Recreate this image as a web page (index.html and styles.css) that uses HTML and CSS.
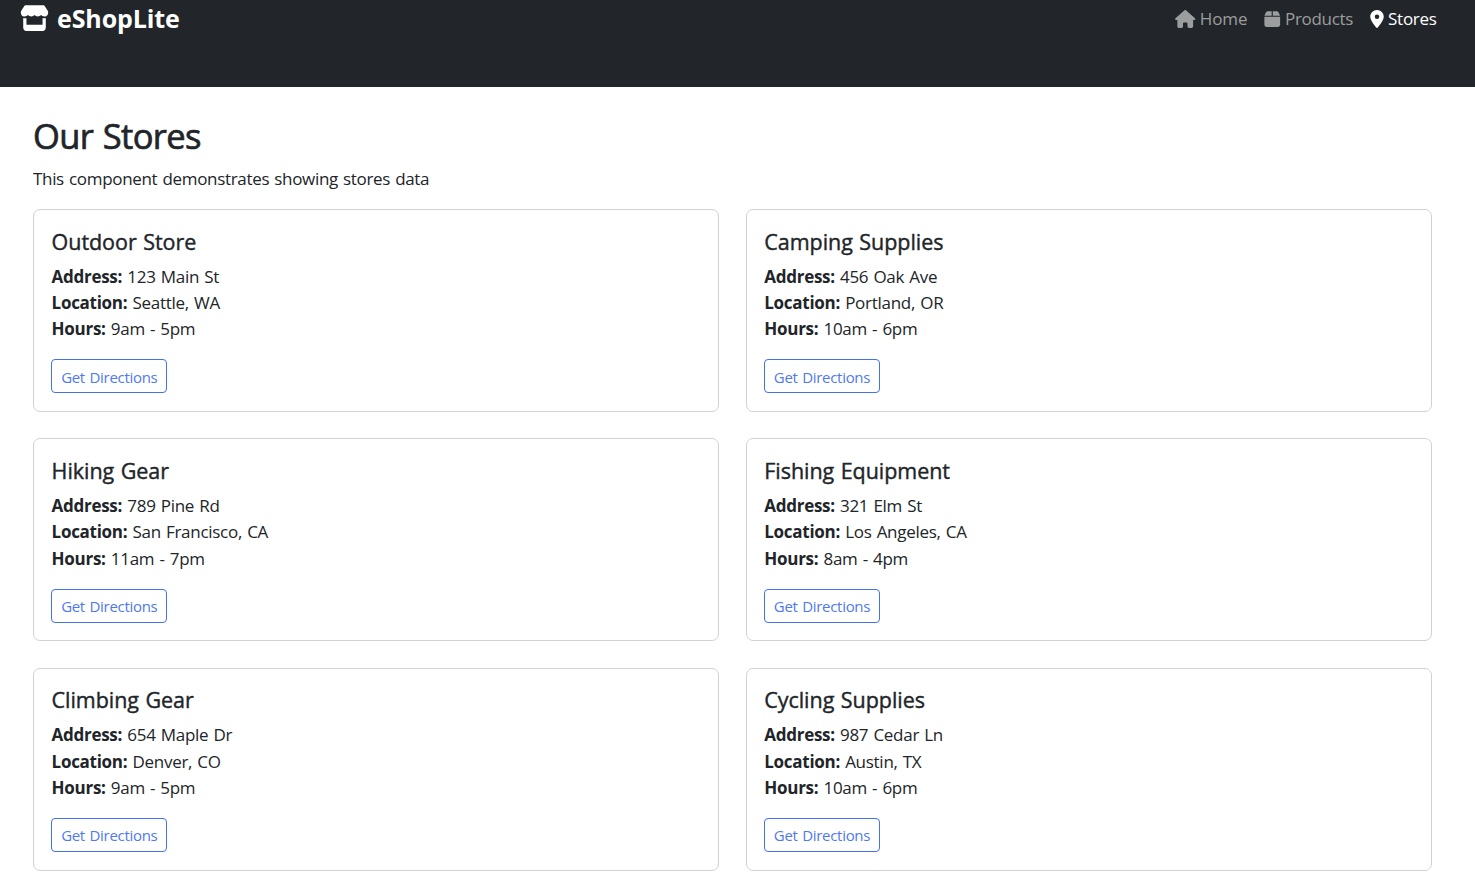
FILE: index.html
```html
<!DOCTYPE html>
<html lang="en">
<head>
<meta charset="utf-8">
<title>eShopLite - Stores</title>
<link rel="stylesheet" href="styles.css">
</head>
<body>
<header class="topbar">
  <a class="brand">
    <svg class="brand-icon" viewBox="0 0 576 512"><path d="M547.6 103.800L490.300 13.100C485.200 5 476.100 0 466.400 0H109.600C99.900 0 90.800 5 85.700 13.100L28.300 103.800c-29.600 46.800-3.400 111.900 51.900 119.400c4 .5 8.100 .8 12.100 .8c26.100 0 49.300-11.400 65.200-29c15.900 17.600 39.100 29 65.200 29c26.100 0 49.300-11.400 65.200-29c15.900 17.600 39.100 29 65.200 29c26.200 0 49.300-11.400 65.200-29c16 17.600 39.100 29 65.200 29c4.100 0 8.100-.3 12.100-.8c55.500-7.400 81.800-72.500 52.100-119.400zM499.700 254.900c-5.300 .7-10.700 1.100-16.200 1.100c-12.400 0-24.300-1.900-35.400-5.300V384H128V250.600c-11.200 3.500-23.200 5.400-35.600 5.400c-5.500 0-11-.4-16.300-1.100c-4.100-.6-8.100-1.300-12.100-2.300V448c0 35.300 28.700 64 64 64H448c35.300 0 64-28.700 64-64V252.600c-4 1-8 1.800-12.300 2.300z"/></svg>
    <span class="brand-name">eShopLite</span>
  </a>
  <nav class="nav">
    <a class="nav-link nav-home"><svg class="icon-house" viewBox="0 0 576 512"><path d="M575.8 255.500c0 18-15 32.100-32 32.100h-32l.7 160.200c0 2.700-.2 5.400-.5 8.100V472c0 22.100-17.900 40-40 40H392c-22.100 0-40-17.900-40-40V384c0-17.700-14.300-32-32-32H256c-17.700 0-32 14.300-32 32v88c0 22.100-17.900 40-40 40H104c-22.100 0-40-17.900-40-40V287.600H32c-18 0-32-14-32-32.100c0-9 3-17 10-24L266.400 8c7-7 15-8 22-8s15 2 21 7L564.800 231.500c8 7 12 15 11 24z"/></svg><span>Home</span></a>
    <a class="nav-link nav-products"><svg class="icon-box" viewBox="0 0 448 512"><path d="M50.700 58.500L0 160H208V32H93.700C75.500 32 58.900 42.300 50.700 58.500zM240 160H448L397.300 58.500C389.100 42.300 372.500 32 354.300 32H240V160zm208 32H0V416c0 35.300 28.700 64 64 64H384c35.300 0 64-28.700 64-64V192z"/></svg><span>Products</span></a>
    <a class="nav-link nav-stores active"><svg class="icon-pin" viewBox="0 0 384 512"><path d="M215.700 499.200C267 435 384 279.400 384 192C384 86 298 0 192 0S0 86 0 192c0 87.400 117 243 168.300 307.200c12.300 15.300 35.100 15.300 47.400 0zM192 128a64 64 0 1 1 0 128a64 64 0 1 1 0-128z"/></svg><span>Stores</span></a>
  </nav>
</header>
<main class="content">
  <h1 class="page-title">Our Stores</h1>
  <p class="intro">This component demonstrates showing stores data</p>
  <div class="grid">
    <article class="card">
      <h2 class="card-title">Outdoor Store</h2>
      <p class="details"><strong>Address:</strong> 123 Main St<br><strong>Location:</strong> Seattle, WA<br><strong>Hours:</strong> 9am - 5pm</p>
      <a class="btn">Get Directions</a>
    </article>
    <article class="card">
      <h2 class="card-title">Camping Supplies</h2>
      <p class="details"><strong>Address:</strong> 456 Oak Ave<br><strong>Location:</strong> Portland, OR<br><strong>Hours:</strong> 10am - 6pm</p>
      <a class="btn">Get Directions</a>
    </article>
    <article class="card">
      <h2 class="card-title">Hiking Gear</h2>
      <p class="details"><strong>Address:</strong> 789 Pine Rd<br><strong>Location:</strong> San Francisco, CA<br><strong>Hours:</strong> 11am - 7pm</p>
      <a class="btn">Get Directions</a>
    </article>
    <article class="card">
      <h2 class="card-title">Fishing Equipment</h2>
      <p class="details"><strong>Address:</strong> 321 Elm St<br><strong>Location:</strong> Los Angeles, CA<br><strong>Hours:</strong> 8am - 4pm</p>
      <a class="btn">Get Directions</a>
    </article>
    <article class="card">
      <h2 class="card-title">Climbing Gear</h2>
      <p class="details"><strong>Address:</strong> 654 Maple Dr<br><strong>Location:</strong> Denver, CO<br><strong>Hours:</strong> 9am - 5pm</p>
      <a class="btn">Get Directions</a>
    </article>
    <article class="card">
      <h2 class="card-title">Cycling Supplies</h2>
      <p class="details"><strong>Address:</strong> 987 Cedar Ln<br><strong>Location:</strong> Austin, TX<br><strong>Hours:</strong> 10am - 6pm</p>
      <a class="btn">Get Directions</a>
    </article>
  </div>
</main>
</body>
</html>
```
FILE: styles.css
```css
* { box-sizing: border-box; }
body {
  margin: 0;
  background: #fff;
  color: #212529;
  font: 400 17px/26.4px "Open Sans", "Noto Sans", sans-serif;
  letter-spacing: -0.3px;
  word-spacing: 1px;
  overflow: hidden;
}
svg { display: block; fill: currentColor; flex: none; }
h1, h2, p { margin: 0; }
.topbar {
  height: 87px;
  background: #22262a;
  display: flex;
  justify-content: space-between;
  align-items: flex-start;
  padding: 0 38.5px 0 20px;
}
.brand { display: flex; gap: 8px; padding-top: 5px; color: #fff; }
.brand-icon { width: 29px; height: 26.4px; }
.brand-name { font-size: 25px; font-weight: 700; line-height: 26px; letter-spacing: -0.1px; }
.nav { display: flex; gap: 17px; padding-top: 5px; color: #9b9d9e; }
.nav-link { display: flex; align-items: center; gap: 4px; }
.nav-link span { padding-top: 1px; }
.nav-home { letter-spacing: -0.1px; }
.active { color: #fff; }
.icon-house { width: 20.5px; height: 18px; }
.icon-box { width: 16.5px; height: 18px; }
.icon-pin { width: 14px; height: 18px; }
.content { padding: 28px 43px 0 33px; }
.page-title {
  font-size: 34.5px;
  line-height: 42px;
  font-weight: 500;
  letter-spacing: -0.6px;
  -webkit-text-stroke: 0.7px currentColor;
}
.intro { margin-top: 9px; margin-bottom: 16.5px; letter-spacing: -0.32px; }
.grid {
  display: grid;
  grid-template-columns: 1fr 1fr;
  gap: 26.4px;
}
.card {
  height: 203px;
  border: 1px solid #d0d2d4;
  border-radius: 7px;
  padding: 17.6px;
}
.card-title {
  font-size: 21.5px;
  line-height: 27.6px;
  font-weight: 500;
  letter-spacing: -0.05px;
  margin-bottom: 8.5px;
  -webkit-text-stroke: 0.4px currentColor;
}
.details { margin-bottom: 16.4px; letter-spacing: -0.28px; }
.btn {
  display: flex;
  align-items: center;
  justify-content: center;
  width: 116px;
  height: 34px;
  margin-left: -0.3px;
  padding-top: 1px;
  border: 1px solid #4571ee;
  border-radius: 4px;
  color: #4f79f0;
  font-size: 15px;
  letter-spacing: -0.3px;
}
```
